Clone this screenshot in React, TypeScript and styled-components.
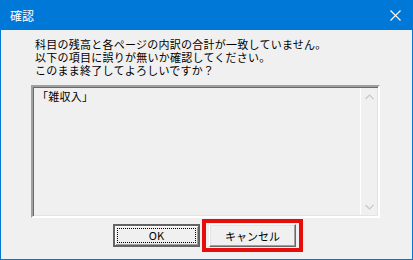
import styled, { createGlobalStyle } from "styled-components";

const GlobalStyle = createGlobalStyle`
  html, body {
    margin: 0;
    padding: 0;
    background: #f0f0f0;
  }
  body {
    font-family: "Noto Sans CJK JP", "Liberation Sans", sans-serif;
  }
`;

const lines = [
  "科目の残高と各ページの内訳の合計が一致していません。",
  "以下の項目に誤りが無いか確認してください。",
  "このまま終了してよろしいですか？",
];

const App = () => {
  return (
    <>
      <GlobalStyle />
      <Window>
        <TitleBar>
          <Title>確認</Title>
          <CloseButton aria-label="閉じる">
            <svg width="11" height="11" viewBox="0 0 11 11">
              <path d="M0.5 0.5 L10.5 10.5 M10.5 0.5 L0.5 10.5" stroke="#fff" strokeWidth="1.1" />
            </svg>
          </CloseButton>
        </TitleBar>
        <Body>
          <Message>
            {lines.map((line) => (
              <Line key={line}>{line}</Line>
            ))}
          </Message>
          <ListBox>
            <Items>
              <Item>「雑収入」</Item>
            </Items>
            <ScrollBar>
              <Arrow>
                <svg width="9" height="6" viewBox="0 0 9 6">
                  <path d="M0.5 5 L4.5 1 L8.5 5" stroke="#c8c8c8" strokeWidth="1.2" fill="none" />
                </svg>
              </Arrow>
              <Arrow>
                <svg width="9" height="6" viewBox="0 0 9 6">
                  <path d="M0.5 1 L4.5 5 L8.5 1" stroke="#c8c8c8" strokeWidth="1.2" fill="none" />
                </svg>
              </Arrow>
            </ScrollBar>
          </ListBox>
          <ButtonRow>
            <DialogButton $default>
              <FocusRing>OK</FocusRing>
            </DialogButton>
            <Highlight>
              <DialogButton>キャンセル</DialogButton>
            </Highlight>
          </ButtonRow>
        </Body>
      </Window>
    </>
  );
};

export default App;

const Window = styled.div`
  width: 413px;
  height: 260px;
  box-sizing: border-box;
  display: flex;
  flex-direction: column;
  border: 1px solid #0078d7;
  border-top: none;
  background: #f0f0f0;
`;

const TitleBar = styled.div`
  height: 30px;
  margin: 0 -1px;
  background: #0078d7;
  display: flex;
  align-items: center;
  justify-content: space-between;
  padding: 0 0 0 10px;
`;

const Title = styled.span`
  color: #fff;
  font-size: 12px;
`;

const CloseButton = styled.div`
  width: 30px;
  height: 30px;
  margin-right: 3px;
  display: flex;
  align-items: center;
  justify-content: center;
`;

const Body = styled.div`
  flex: 1;
  display: flex;
  flex-direction: column;
  padding: 8px 32px 0 30px;
`;

const Message = styled.div`
  padding-left: 4px;
  display: flex;
  flex-direction: column;
`;

const Line = styled.div`
  height: 13px;
  font-size: 11px;
  line-height: 13px;
  letter-spacing: 0.25px;
  white-space: nowrap;
  color: #000;
`;

const ListBox = styled.div`
  margin-top: 8px;
  height: 133px;
  box-sizing: border-box;
  display: flex;
  border-style: solid;
  border-width: 2px;
  border-color: #a0a0a0 #ffffff #ffffff #a0a0a0;
  box-shadow: inset 1px 1px 0 #696969, inset -1px -1px 0 #e3e3e3;
  background: #f0f0f0;
`;

const Items = styled.div`
  flex: 1;
  padding: 3px 0 0 4px;
`;

const Item = styled.div`
  font-size: 11px;
  line-height: 13px;
  letter-spacing: 0.25px;
  color: #000;
`;

const ScrollBar = styled.div`
  width: 16px;
  margin: 1px 1px 1px 0;
  border-left: 1px solid #ffffff;
  display: flex;
  flex-direction: column;
  justify-content: space-between;
  align-items: center;
  background: #f0f0f0;
`;

const Arrow = styled.div`
  height: 17px;
  display: flex;
  align-items: center;
  justify-content: center;
`;

const ButtonRow = styled.div`
  margin-top: 6px;
  display: flex;
  justify-content: center;
  gap: 9px;
  margin-left: -2px;
`;

const DialogButton = styled.div<{ $default?: boolean }>`
  width: 87px;
  height: 23px;
  box-sizing: border-box;
  display: flex;
  align-items: center;
  justify-content: center;
  font-size: 11px;
  color: #000;
  background: #f0f0f0;
  border-style: solid;
  border-width: ${({ $default }) => ($default ? "2px" : "1px")};
  border-color: ${({ $default }) =>
    $default ? "#646464" : "#ffffff #696969 #696969 #ffffff"};
  box-shadow: ${({ $default }) =>
    $default
      ? "inset 1px 1px 0 #ffffff, inset -1px -1px 0 #a0a0a0"
      : "inset -1px -1px 0 #a0a0a0, inset 1px 1px 0 #e3e3e3"};
`;

const FocusRing = styled.span`
  width: 79px;
  height: 15px;
  box-sizing: border-box;
  border: 1px dotted #000;
  display: flex;
  align-items: center;
  justify-content: center;
  line-height: 13px;
`;

const Highlight = styled.div`
  position: relative;

  &::after {
    content: "";
    position: absolute;
    inset: -5px -7px;
    border: 4px solid #e60d0d;
    pointer-events: none;
  }
`;
